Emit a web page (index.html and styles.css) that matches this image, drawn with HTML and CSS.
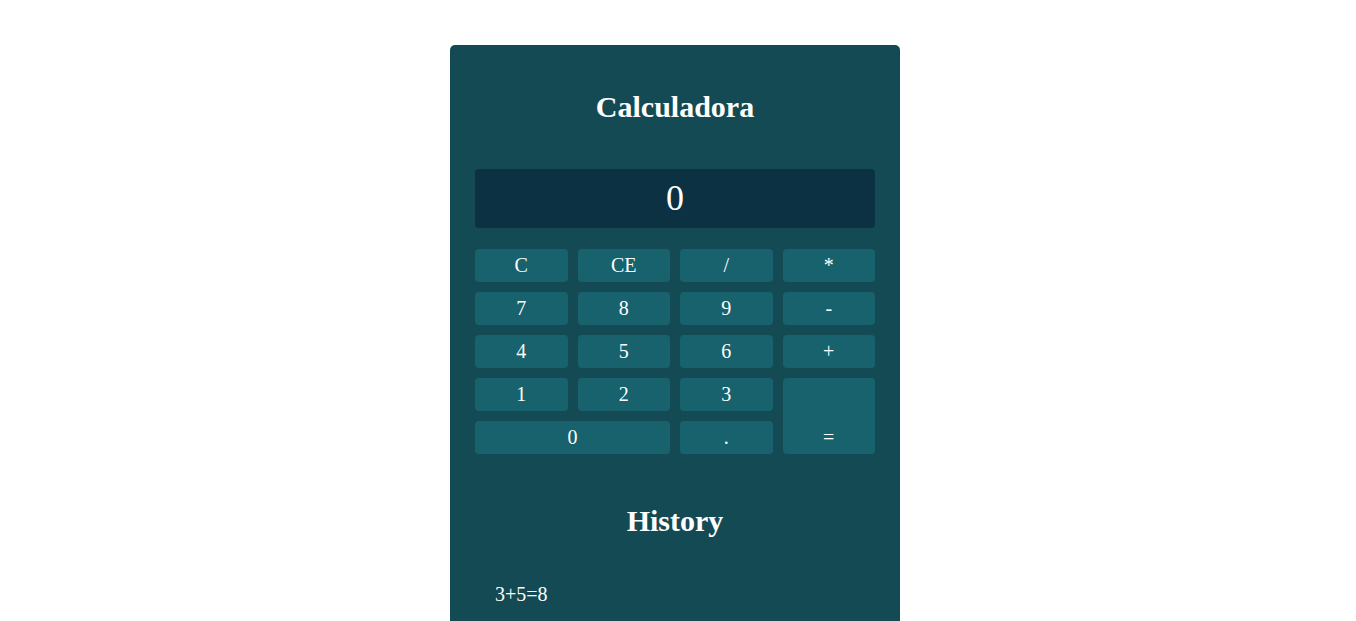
FILE: index.html
```html
<!DOCTYPE html>
<html lang="es">
<head>
<meta charset="utf-8">
<title>Calculadora</title>
<link rel="stylesheet" href="styles.css">
</head>
<body>
<div class="page">
  <div class="calculator">
    <h1 class="title">Calculadora</h1>
    <div class="display">0</div>
    <div class="keys">
      <button class="key">C</button>
      <button class="key">CE</button>
      <button class="key">/</button>
      <button class="key">*</button>
      <button class="key">7</button>
      <button class="key">8</button>
      <button class="key">9</button>
      <button class="key">-</button>
      <button class="key">4</button>
      <button class="key">5</button>
      <button class="key">6</button>
      <button class="key">+</button>
      <button class="key">1</button>
      <button class="key">2</button>
      <button class="key">3</button>
      <button class="key key-equals"><span>=</span></button>
      <button class="key key-zero">0</button>
      <button class="key">.</button>
    </div>
    <h2 class="history-title">History</h2>
    <ul class="history-list">
      <li class="history-item">3+5=8</li>
    </ul>
  </div>
</div>
</body>
</html>
```

FILE: styles.css
```css
html, body {
  margin: 0;
  padding: 0;
  background: #ffffff;
}

body {
  font-family: "Liberation Serif", "Times New Roman", serif;
  color: #ffffff;
}

.page {
  display: flex;
  justify-content: center;
  padding: 45px 6px 420px 0;
}

.calculator {
  width: 400px;
  padding: 25px 25px 60px;
  background: #144a54;
  border-radius: 5px;
}

.title {
  margin: 20px 0 45px;
  font-size: 30px;
  font-weight: bold;
  text-align: center;
}

.display {
  height: 59px;
  line-height: 59px;
  background: #0b3143;
  border-radius: 4px;
  font-size: 36px;
  text-align: center;
  margin-bottom: 21px;
}

.keys {
  display: grid;
  grid-template-columns: repeat(4, 1fr);
  grid-auto-rows: 33px;
  gap: 10px;
}

.key {
  border: none;
  border-radius: 4px;
  background: #17626c;
  color: #ffffff;
  font-family: "Liberation Serif", "Times New Roman", serif;
  font-size: 20px;
  padding: 0;
  display: flex;
  align-items: center;
  justify-content: center;
}

.key-equals {
  grid-column: 4;
  grid-row: 4 / span 2;
  align-items: flex-end;
}

.key-equals span {
  display: block;
  line-height: 33px;
}

.key-zero {
  grid-column: 1 / span 2;
}

.history-title {
  margin: 50px 0 0;
  font-size: 30px;
  font-weight: bold;
  text-align: center;
}

.history-list {
  list-style: none;
  margin: 45px 0 0;
  padding: 0 0 0 20px;
}

.history-item {
  font-size: 20px;
}
```
